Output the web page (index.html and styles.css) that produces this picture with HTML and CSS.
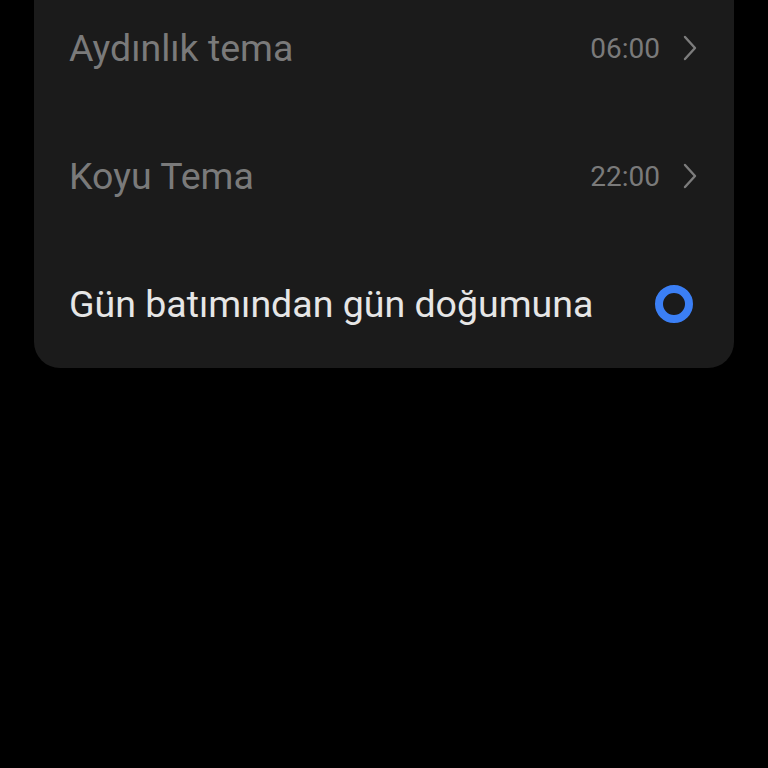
FILE: index.html
```html
<!DOCTYPE html>
<html lang="tr">
<head>
    <meta charset="UTF-8">
    <meta name="viewport" content="width=device-width, initial-scale=1.0">
    <title>Karanlık mod zamanlaması</title>
    <link rel="stylesheet" href="styles.css">
</head>
<body>
    <div class="card">
        <div class="row">
            <span class="label muted">Aydınlık tema</span>
            <span class="value">06:00</span>
            <svg class="chevron" viewBox="0 0 14 26" width="14" height="26">
                <path d="M2 2 L12 13 L2 24" fill="none" stroke="#7c7c7c" stroke-width="2.4" stroke-linecap="round" stroke-linejoin="round"/>
            </svg>
        </div>
        <div class="row">
            <span class="label muted">Koyu Tema</span>
            <span class="value">22:00</span>
            <svg class="chevron" viewBox="0 0 14 26" width="14" height="26">
                <path d="M2 2 L12 13 L2 24" fill="none" stroke="#7c7c7c" stroke-width="2.4" stroke-linecap="round" stroke-linejoin="round"/>
            </svg>
        </div>
        <div class="row">
            <span class="label">Gün batımından gün doğumuna</span>
            <span class="radio"></span>
        </div>
    </div>
</body>
</html>
```
FILE: styles.css
```css
body {
    margin: 0;
    padding: 0;
    background-color: #000;
    font-family: Roboto, "Noto Sans", sans-serif;
    overflow: hidden;
}

.card {
    background-color: #1b1b1b;
    margin: -40px 34px 0;
    padding-top: 24px;
    border-radius: 26px;
}

.row {
    display: flex;
    align-items: center;
    height: 128px;
    padding: 0 37px 0 35px;
}

.label {
    flex: 1;
    font-size: 37.5px;
    color: #e6e6e6;
}

.label.muted {
    color: #7a7a7a;
}

.value {
    font-size: 28px;
    color: #7a7a7a;
    margin-right: 23px;
}

.chevron {
    display: block;
}

.radio {
    width: 22px;
    height: 22px;
    border: 8px solid #3b7ff5;
    border-radius: 50%;
    margin-right: 4px;
}
```
